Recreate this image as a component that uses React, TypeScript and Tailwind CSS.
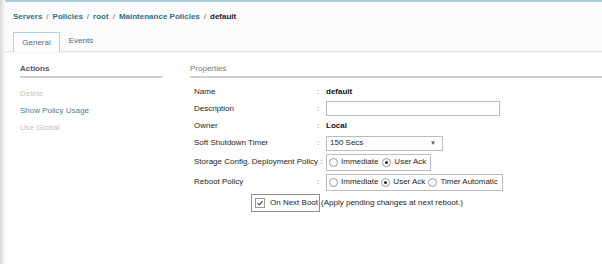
// Radio option used in the policy rows
function Radio({ label, checked }: { label: string; checked?: boolean }) {
  return (
    <span className="flex items-center gap-[3px]">
      <span className="flex h-[9px] w-[9px] items-center justify-center rounded-full border border-[#9a9a9a] bg-white">
        {checked && <span className="h-[3px] w-[3px] rounded-full bg-[#222]" />}
      </span>
      <span>{label}</span>
    </span>
  );
}

// Label + colon + value row of the Properties panel
function Row({
  label,
  h,
  children,
}: {
  label: string;
  h: string;
  children?: React.ReactNode;
}) {
  return (
    <div className={`flex items-center ${h}`}>
      <span className="w-[123px] shrink-0 whitespace-nowrap">{label}</span>
      <span className="w-[9px] shrink-0 text-[#666]">:</span>
      {children}
    </div>
  );
}

export default function App() {
  return (
    <div className="flex h-[264px] w-[602px] bg-white font-['Liberation_Sans',Arial,sans-serif] text-[8px] text-[#262626]">
      <div className="w-[5px] shrink-0 bg-gradient-to-r from-[#d9d9d9] to-[#fafafa]" />

      <div className="flex flex-1 flex-col">
        <div className="border-t-2 border-b border-[#a9d0de] border-b-[#e2e2e2] bg-[#fcfcfc] pl-[8px] shadow-[0_1px_1px_rgba(0,0,0,0.04)]">
          <div className="flex h-[27px] items-center gap-[4px] pt-[2px] font-bold text-[#2d6f88]">
            <span>Servers</span>
            <span className="font-normal text-[#666]">/</span>
            <span>Policies</span>
            <span className="font-normal text-[#666]">/</span>
            <span>root</span>
            <span className="font-normal text-[#666]">/</span>
            <span>Maintenance Policies</span>
            <span className="font-normal text-[#666]">/</span>
            <span className="text-[#222]">default</span>
          </div>
          <div className="mt-[3px] flex h-[19px] items-end">
            <div className="-mb-px flex h-[20px] w-[47px] items-center justify-center border border-b-0 border-[#a9d4e4] bg-white text-[#4d6b78]">
              General
            </div>
            <div className="flex h-[20px] w-[42px] items-center justify-center text-[#4d6b78]">
              Events
            </div>
          </div>
        </div>

        <div className="flex pt-[10px]">
          <div className="ml-[15px] w-[143px]">
            <div className="flex h-[16px] items-center border-b-2 border-[#d2d2d2] pb-[1px] font-semibold text-[#555]">
              Actions
            </div>
            <div className="mt-[7px] flex flex-col">
              <span className="flex h-[17px] items-center text-[#c4c4c4]">Delete</span>
              <span className="flex h-[17px] items-center text-[#3b87a3]">Show Policy Usage</span>
              <span className="flex h-[17px] items-center text-[#c4c4c4]">Use Global</span>
            </div>
          </div>

          <div className="ml-[27px] flex-1">
            <div className="flex h-[16px] items-center border-b-2 border-[#d2d2d2] pb-[1px] text-[#777]">
              Properties
            </div>
            <div className="mt-[6px] flex flex-col pl-[4px]">
              <Row label="Name" h="h-[16px]">
                <span className="font-bold text-[#111]">default</span>
              </Row>
              <Row label="Description" h="h-[17px]">
                <span className="h-[15px] w-[174px] border border-[#bdbdbd] bg-white" />
              </Row>
              <Row label="Owner" h="h-[17px]">
                <span className="font-bold text-[#111]">Local</span>
              </Row>
              <Row label="Soft Shutdown Timer" h="h-[18px]">
                <span className="flex h-[15px] w-[117px] items-center justify-between border border-[#bdbdbd] bg-white pl-[3px] pr-[6px]">
                  <span>150 Secs</span>
                  <span className="text-[6px] text-[#555]">▼</span>
                </span>
              </Row>
              <div className="flex h-[20px] items-center">
                <span className="w-[132px] shrink-0 whitespace-nowrap">
                  Storage Config. Deployment Policy <span className="text-[#666]">:</span>
                </span>
                <span className="flex h-[17px] items-center gap-[4px] border border-[#bdbdbd] bg-white px-[2px] pr-[4px]">
                  <Radio label="Immediate" />
                  <Radio label="User Ack" checked />
                </span>
              </div>
              <Row label="Reboot Policy" h="h-[20px]">
                <span className="flex h-[17px] items-center gap-[3px] border border-[#bdbdbd] bg-white px-[2px] pr-[4px]">
                  <Radio label="Immediate" />
                  <Radio label="User Ack" checked />
                  <Radio label="Timer Automatic" />
                </span>
              </Row>
              <div className="flex h-[21px] items-center pl-[57px]">
                <span className="flex h-[18px] items-center gap-[5px] border border-[#8f8f8f] bg-white pl-[3px] pr-[1px]">
                  <span className="flex h-[10px] w-[10px] items-center justify-center border border-[#9a9a9a]">
                    <svg viewBox="0 0 10 10" className="h-[8px] w-[8px]">
                      <path d="M2 5.2 L4.2 7.3 L8.2 2.6" fill="none" stroke="#333" strokeWidth="1.3" />
                    </svg>
                  </span>
                  <span>On Next Boot</span>
                </span>
                <span className="ml-[1px]">(Apply pending changes at next reboot.)</span>
              </div>
            </div>
          </div>
        </div>
      </div>
    </div>
  );
}
